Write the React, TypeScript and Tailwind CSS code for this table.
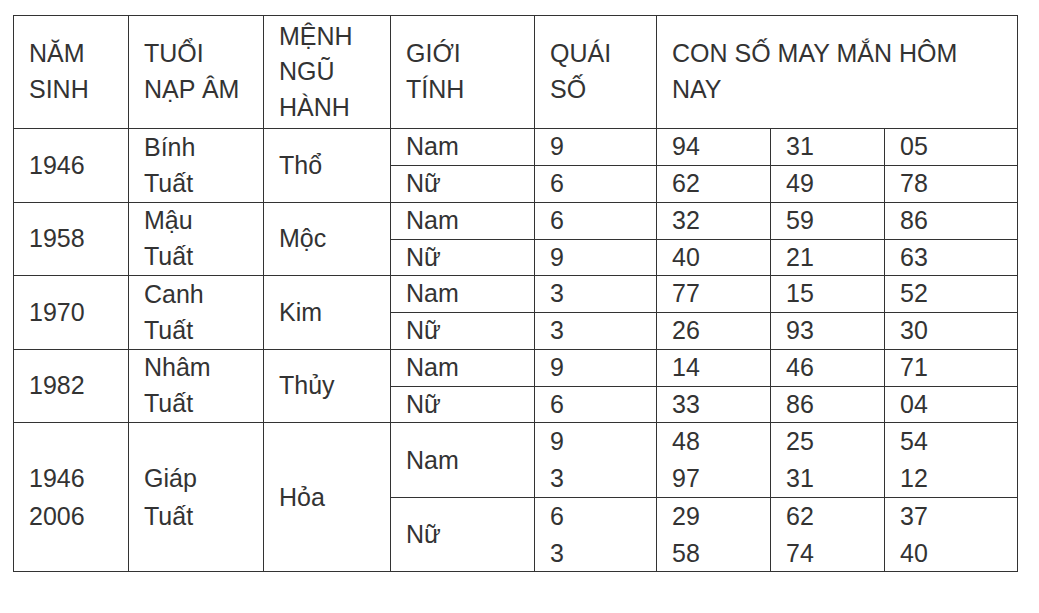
import React from "react";

interface Group {
  year: string[];
  tuoi: string[];
  menh: string;
  rows: { gender: string; quai: string[]; nums: string[][] }[];
}

const groups: Group[] = [
  {
    year: ["1946"],
    tuoi: ["Bính", "Tuất"],
    menh: "Thổ",
    rows: [
      { gender: "Nam", quai: ["9"], nums: [["94"], ["31"], ["05"]] },
      { gender: "Nữ", quai: ["6"], nums: [["62"], ["49"], ["78"]] },
    ],
  },
  {
    year: ["1958"],
    tuoi: ["Mậu", "Tuất"],
    menh: "Mộc",
    rows: [
      { gender: "Nam", quai: ["6"], nums: [["32"], ["59"], ["86"]] },
      { gender: "Nữ", quai: ["9"], nums: [["40"], ["21"], ["63"]] },
    ],
  },
  {
    year: ["1970"],
    tuoi: ["Canh", "Tuất"],
    menh: "Kim",
    rows: [
      { gender: "Nam", quai: ["3"], nums: [["77"], ["15"], ["52"]] },
      { gender: "Nữ", quai: ["3"], nums: [["26"], ["93"], ["30"]] },
    ],
  },
  {
    year: ["1982"],
    tuoi: ["Nhâm", "Tuất"],
    menh: "Thủy",
    rows: [
      { gender: "Nam", quai: ["9"], nums: [["14"], ["46"], ["71"]] },
      { gender: "Nữ", quai: ["6"], nums: [["33"], ["86"], ["04"]] },
    ],
  },
  {
    year: ["1946", "2006"],
    tuoi: ["Giáp", "Tuất"],
    menh: "Hỏa",
    rows: [
      { gender: "Nam", quai: ["9", "3"], nums: [["48", "97"], ["25", "31"], ["54", "12"]] },
      { gender: "Nữ", quai: ["6", "3"], nums: [["29", "58"], ["62", "74"], ["37", "40"]] },
    ],
  },
];

function Lines({ items }: { items: string[] }) {
  return (
    <>
      {items.map((t, i) => (
        <React.Fragment key={i}>
          {i > 0 && <br />}
          {t}
        </React.Fragment>
      ))}
    </>
  );
}

const cell = "border border-[#333] px-[15px] py-0 align-middle";
const head = "border border-[#333] px-[15px] py-[2.5px] align-middle font-normal text-left";

export default function App() {
  return (
    <div className="min-h-screen bg-white pl-[13px] pt-[15px] font-['Liberation_Sans',Arial,sans-serif] text-[25px] leading-[35.75px] text-[#333]">
      <table className="w-[1005px] table-fixed border-collapse">
        <colgroup>
          <col className="w-[115px]" />
          <col className="w-[135px]" />
          <col className="w-[127px]" />
          <col className="w-[144px]" />
          <col className="w-[122px]" />
          <col className="w-[114px]" />
          <col className="w-[114px]" />
          <col className="w-[133px]" />
        </colgroup>
        <thead>
          <tr>
            <th className={head}>NĂM<br />SINH</th>
            <th className={head}>TUỔI<br />NẠP ÂM</th>
            <th className={head}>MỆNH<br />NGŨ<br />HÀNH</th>
            <th className={head}>GIỚI<br />TÍNH</th>
            <th className={head}>QUÁI<br />SỐ</th>
            <th className={head} colSpan={3}>CON SỐ MAY MẮN HÔM<br />NAY</th>
          </tr>
        </thead>
        <tbody>
          {groups.map((g, gi) =>
            g.rows.map((r, ri) => {
              const multi = r.quai.length > 1;
              const main = multi ? `${cell} leading-[38px]` : cell;
              const sub = multi ? `${cell} leading-[36.75px]` : cell;
              return (
                <tr key={`${gi}-${ri}`}>
                  {ri === 0 && (
                    <>
                      <td className={main} rowSpan={2}><Lines items={g.year} /></td>
                      <td className={main} rowSpan={2}><Lines items={g.tuoi} /></td>
                      <td className={main} rowSpan={2}>{g.menh}</td>
                    </>
                  )}
                  <td className={sub}>{r.gender}</td>
                  <td className={sub}><Lines items={r.quai} /></td>
                  {r.nums.map((n, ni) => (
                    <td key={ni} className={sub}><Lines items={n} /></td>
                  ))}
                </tr>
              );
            }),
          )}
        </tbody>
      </table>
    </div>
  );
}
